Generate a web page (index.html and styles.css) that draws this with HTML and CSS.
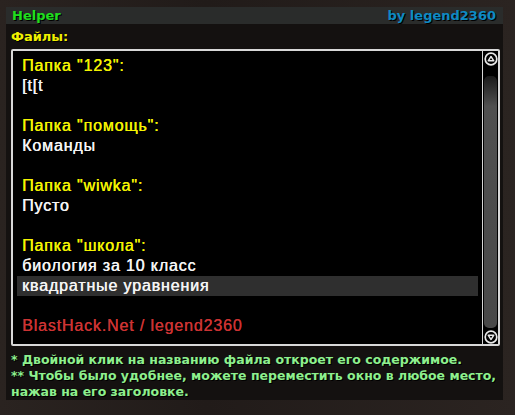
FILE: index.html
```html
<!DOCTYPE html>
<html lang="ru">
<head>
  <meta charset="UTF-8" />
  <title>Helper</title>
  <link rel="stylesheet" href="styles.css">
</head>
<body>
  <div class="window">
    <div class="titlebar">
      <span class="title">Helper</span>
      <span class="author">by legend2360</span>
    </div>
    <div class="content">
      <div class="label">Файлы:</div>
      <div class="listbox">
        <div class="items">
          <div class="row folder">Папка "123":</div>
          <div class="row">[t[t</div>
          <div class="row"></div>
          <div class="row folder">Папка "помощь":</div>
          <div class="row">Команды</div>
          <div class="row"></div>
          <div class="row folder">Папка "wiwka":</div>
          <div class="row">Пусто</div>
          <div class="row"></div>
          <div class="row folder">Папка "школа":</div>
          <div class="row">биология за 10 класс</div>
          <div class="row selected">квадратные уравнения</div>
          <div class="row"></div>
          <div class="row credit">BlastHack.Net / legend2360</div>
        </div>
        <div class="scrollbar">
          <div class="arrow">
            <svg width="14" height="14" viewBox="0 0 14 14"><circle cx="7" cy="7" r="5.8" fill="none" stroke="#e8e8e8" stroke-width="1.7"/><path d="M4.2 8.8 L7 4.5 L9.8 8.8 Z" fill="none" stroke="#e8e8e8" stroke-width="1.4" stroke-linejoin="round"/></svg>
          </div>
          <div class="track"><div class="thumb"></div></div>
          <div class="arrow">
            <svg width="14" height="14" viewBox="0 0 14 14"><circle cx="7" cy="7" r="5.8" fill="none" stroke="#e8e8e8" stroke-width="1.7"/><path d="M4.2 5.2 L7 9.5 L9.8 5.2 Z" fill="none" stroke="#e8e8e8" stroke-width="1.4" stroke-linejoin="round"/></svg>
          </div>
        </div>
      </div>
      <div class="notes">
        <div>* Двойной клик на названию файла откроет его содержимое.</div>
        <div>** Чтобы было удобнее, можете переместить окно в любое место,</div>
        <div>нажав на его заголовке.</div>
      </div>
    </div>
  </div>
</body>
</html>
```

FILE: styles.css
```css
body {
  margin: 0;
  width: 515px;
  height: 415px;
  overflow: hidden;
  background: #261f1c;
  background-image: linear-gradient(90deg, #2a2320 0%, #211b19 40%, #2b2421 100%);
}
.window {
  margin: 7px 0 0 6px;
  width: 497px;
  height: 393px;
  background: #141110;
  display: flex;
  flex-direction: column;
}
.titlebar {
  height: 18px;
  background: #2a2c2b;
  display: flex;
  justify-content: space-between;
  align-items: center;
  padding: 0 7px 0 6px;
  font-family: "DejaVu Sans", sans-serif;
  font-weight: bold;
  font-size: 13px;
  text-shadow: 1px 1px 0 #000;
}
.title {
  color: #1ede1e;
}
.author {
  color: #0d8ac4;
}
.content {
  padding: 0 3px 0 5px;
}
.label {
  font-family: "DejaVu Sans", sans-serif;
  font-weight: bold;
  font-size: 13px;
  color: #f0f000;
  text-shadow: 1px 1px 0 #000;
  height: 25px;
  line-height: 26px;
}
.listbox {
  height: 293px;
  background: #000;
  border: 2px solid #d8d8d8;
  border-radius: 2px;
  display: flex;
}
.items {
  flex: 1;
  padding: 5px 4px 0 4px;
  font-family: "Liberation Sans", Arial, sans-serif;
  font-size: 16px;
  letter-spacing: 0.85px;
  color: #f4f4f4;
  text-shadow: 0.4px 0 0 currentColor;
}
.row {
  height: 20px;
  line-height: 20px;
  padding-left: 5px;
}
.folder {
  color: #f4f400;
}
.selected {
  background: #2f2f2f;
}
.credit {
  color: #cc3333;
}
.scrollbar {
  width: 15px;
  border-left: 1px solid #d8d8d8;
  display: flex;
  flex-direction: column;
  align-items: center;
}
.arrow {
  height: 15px;
  display: flex;
  align-items: center;
  justify-content: center;
}
.track {
  flex: 1;
  width: 13px;
  display: flex;
  padding: 10px 0 1px;
}
.thumb {
  flex: 1;
  border-radius: 5px;
  background: linear-gradient(180deg, #1a1a1a 0%, #505050 12%, #484848 100%);
}
.notes {
  padding: 6px 0 0 0;
  font-family: "DejaVu Sans", sans-serif;
  font-weight: bold;
  font-size: 12.5px;
  line-height: 16px;
  color: #8ef08e;
  text-shadow: 1px 1px 0 #000;
}
```
